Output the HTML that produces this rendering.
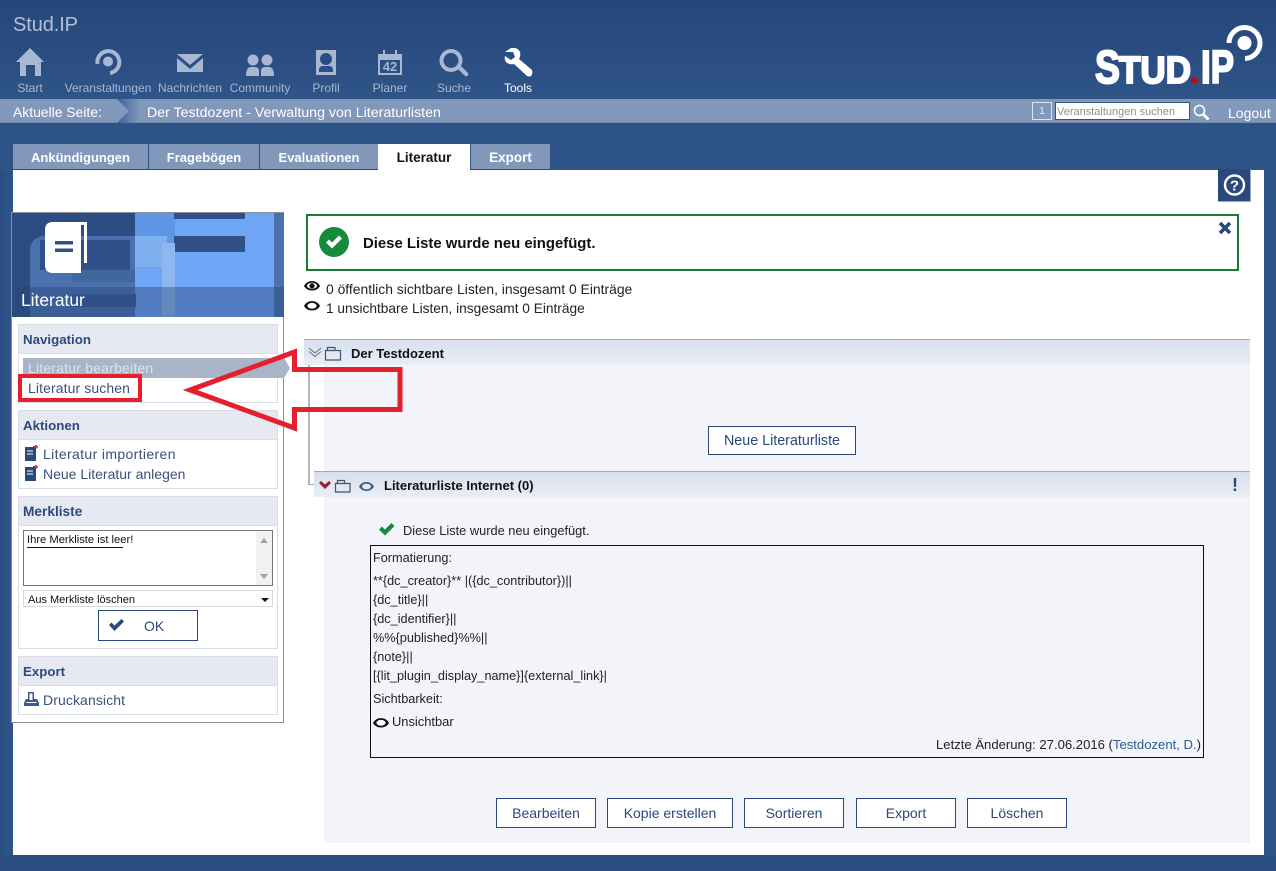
<!DOCTYPE html>
<html lang="de"><head><meta charset="utf-8"><title>Stud.IP</title>
<style>
*{box-sizing:border-box}
html,body{margin:0;padding:0}
body{width:1276px;height:871px;position:relative;overflow:hidden;background:#2e5386;font-family:"Liberation Sans",sans-serif;font-size:14px;color:#222}
.a,.t{position:absolute}
.t{white-space:nowrap;line-height:16px}
.nav{color:#a9b7d0;font-size:12px;text-align:center;width:90px;top:80px}
.tab{position:absolute;top:144px;height:26px;background:#8298bb;color:#fff;font-weight:bold;font-size:13px;line-height:27px;text-align:center;border-bottom:1px solid #28497a}
.sh{position:absolute;left:18px;width:260px;background:#e6e9f1;border:1px solid #d9dde6;color:#2d4a7c;font-weight:bold;font-size:13.3px;padding-left:4px}
.sb{position:absolute;left:18px;width:260px;background:#fff;border:1px solid #d9dde6;border-top:0}
.lnk{color:#3b5078}
.btn{position:absolute;top:798px;height:30px;width:100px;background:#fff;border:1px solid #28497a;color:#28497a;text-align:center;line-height:29px;font-size:14px}
.m{left:373px;color:#222;font-size:12.7px}
svg{position:absolute;overflow:visible}
</style></head><body>
<div class="a" style="left:0;top:0;width:1276px;height:99px;background:linear-gradient(#26467a,#2f5488)"></div>
<div class="t" style="left:13px;top:13px;font-size:20px;line-height:24px;color:#b4c0d5;letter-spacing:-.1px">Stud.IP</div>

<svg style="left:0;top:0" width="560" height="100" fill="#a9b7d3">
<path d="M30 48 L44 62 H41 V76 H35 V65 H26 V76 H20 V62 H16Z"/>
<path d="M97.500 64 A11 11 0 1 1 110 73" fill="none" stroke="#a9b7d3" stroke-width="4"/><circle cx="108" cy="61.500" r="5"/>
<path d="M177 54 H203 L190 65Z M177 58 L190 69 L203 58 V72 H177Z"/>
<circle cx="253" cy="60" r="5.500"/><circle cx="267" cy="60" r="5.500"/>
<path d="M246 76 Q246 67 251 67 H255 Q259 67 259 71 V76Z M261 76 V71 Q261 67 265 67 H269 Q274 67 274 76Z"/>
<path fill-rule="evenodd" d="M316 50 H336 V75 H316Z M326 53 A6 6 0 1 0 326 65 A6 6 0 1 0 326 53Z M319 72 H333 V70 Q333 66 329 66 H323 Q319 66 319 70Z"/>
<path fill-rule="evenodd" d="M378 54 H383 V50 H385 V54 H395 V50 H397 V54 H402 V75 H378Z M380 60 V73 H400 V60Z"/>
<text x="390" y="71" font-size="13" font-weight="bold" text-anchor="middle" font-family="Liberation Sans">42</text>
<path fill-rule="evenodd" d="M451 49 A11.500 11.500 0 1 0 451 72 A11.500 11.500 0 1 0 451 49Z M451 53 A7.500 7.500 0 1 1 451 68 A7.500 7.500 0 1 1 451 53Z"/>
<path d="M458 69 L461 66 L468 73 Q469 75 467 76 Q466 77 464 75Z"/>
<path fill="#fff" d="M505 52 L511 48 Q518 47 520 52 Q521 56 519 59 L532 70 Q533 74 531 76 Q529 77 527 76 L514 64 Q509 65 506 62 Q504 59 505 56 L511 60 L515 57 L513 52Z"/>
</svg>
<div class="t nav" style="left:-15px">Start</div>
<div class="t nav" style="left:63px">Veranstaltungen</div>
<div class="t nav" style="left:145px">Nachrichten</div>
<div class="t nav" style="left:215px">Community</div>
<div class="t nav" style="left:281px">Profil</div>
<div class="t nav" style="left:345px">Planer</div>
<div class="t nav" style="left:409px">Suche</div>
<div class="t nav" style="left:473px;color:#fff">Tools</div>

<svg style="left:1090px;top:20px" width="180" height="70" font-family="Liberation Sans" font-weight="bold" fill="#fff" stroke="#fff" stroke-width="2">
<text x="5" y="63" font-size="46" textLength="25" lengthAdjust="spacingAndGlyphs">S</text>
<text x="29" y="63" font-size="38" textLength="72" lengthAdjust="spacingAndGlyphs">TUD</text>
<rect x="101" y="57" width="7" height="6" fill="#b5121b" stroke="none"/>
<text x="111" y="63" font-size="46" textLength="33" lengthAdjust="spacingAndGlyphs">IP</text>
<path d="M139 23 A15.500 15.500 0 1 1 155 38.500" fill="none" stroke-width="5"/>
<circle cx="154.500" cy="23" r="7" stroke="none"/>
</svg>

<div class="a" style="left:0;top:99px;width:1276px;height:24px;background:#8298bb;border-bottom:1px solid #7489ac"></div>
<svg style="left:0;top:99px" width="150" height="24"><defs><linearGradient id="g" x1="0" x2="1"><stop offset="0" stop-color="#3f6196"/><stop offset="1" stop-color="#8298bb"/></linearGradient></defs><path d="M117 0 L129 12 L117 24 H140 V0Z" fill="url(#g)"/></svg>
<div class="t" style="left:13px;top:104px;color:#fff;font-size:13.900px">Aktuelle Seite:</div>
<div class="t" style="left:147px;top:105px;color:#fff;font-size:14.200px">Der Testdozent - Verwaltung von Literaturlisten</div>
<div class="a" style="left:1032px;top:102px;width:20px;height:18px;border:1px solid #dfe5ef;color:#e8edf4;font-size:10px;line-height:17px;text-align:center">1</div>
<div class="a" style="left:1055px;top:102px;width:135px;height:18px;background:#fff;border:1px solid #36527f;color:#8f8f8f;font-size:11px;line-height:18px;padding-left:1px;white-space:nowrap;overflow:hidden">Veranstaltungen suchen</div>
<svg style="left:1193px;top:104px" width="17" height="17" fill="none" stroke="#fff"><circle cx="6.500" cy="6.500" r="5" stroke-width="1.600"/><path d="M10.500 10.500 L15.500 15.500" stroke-width="3"/></svg>
<div class="t" style="left:1228px;top:105px;color:#fff;font-size:14px">Logout</div>

<div class="tab" style="left:13px;width:135px">Ankündigungen</div>
<div class="tab" style="left:149px;width:110px">Fragebögen</div>
<div class="tab" style="left:260px;width:118px">Evaluationen</div>
<div class="tab" style="left:378px;width:92px;height:27px;background:#fff;color:#111;border:0;font-size:13.500px">Literatur</div>
<div class="tab" style="left:471px;width:79px;font-size:13.500px">Export</div>

<div class="a" style="left:13px;top:170px;width:1251px;height:685px;background:#fff"></div>
<div class="a" style="left:0;top:855px;width:1276px;height:16px;background:#2a4e82"></div>
<div class="a" style="left:0;top:170px;width:13px;height:685px;background:linear-gradient(90deg,#2a4e82,#2f5488)"></div>

<div class="a" style="left:1218px;top:169px;width:33px;height:33px;background:#28497a;border-right:1px solid #9aa9c2;border-bottom:1px solid #9aa9c2"></div>
<svg style="left:1223px;top:174px" width="24" height="22"><circle cx="11.500" cy="11" r="9.500" fill="none" stroke="#fff" stroke-width="2.400"/><text x="11.500" y="16.500" font-size="15" font-weight="bold" fill="#fff" text-anchor="middle" font-family="Liberation Sans">?</text></svg>

<!-- sidebar -->
<div class="a" style="left:11px;top:212px;width:273px;height:511px;background:#fff;border:1px solid #8a8f99"></div>
<div class="a" style="left:12px;top:213px;width:272px;height:104px;background:#3d5f95;overflow:hidden">
<div class="a" style="left:0;top:0;width:123px;height:104px;background:#2c4d82"></div>
<div class="a" style="left:123px;top:0;width:149px;height:104px;background:#5f97e6"></div>
<div class="a" style="left:163px;top:0;width:99px;height:104px;background:#6ea6f5"></div>
<div class="a" style="left:262px;top:0;width:10px;height:104px;background:#4a70ad"></div>
<div class="a" style="left:162px;top:23px;width:71px;height:16px;background:#2f5088"></div>
<div class="a" style="left:162px;top:0;width:71px;height:6px;background:#2f5088"></div>
<div class="a" style="left:18px;top:23px;width:105px;height:81px;background:#4a70ad;border-radius:14px 0 0 0"></div>
<div class="a" style="left:28px;top:27px;width:90px;height:30px;background:#2f5088"></div>
<div class="a" style="left:60px;top:57px;width:63px;height:12px;background:#3f689f"></div>
<div class="a" style="left:123px;top:23px;width:32px;height:31px;background:#7fb0ef"></div>
<div class="a" style="left:123px;top:54px;width:27px;height:50px;background:#6ea6f5"></div>
<div class="a" style="left:150px;top:30px;width:13px;height:74px;background:#8db8ef"></div>
<div class="a" style="left:0;top:74px;width:272px;height:30px;background:rgba(40,70,120,.42)"></div>
<div class="a" style="left:60px;top:81px;width:64px;height:13px;background:#2f5088"></div>
</div>
<svg style="left:45px;top:222px" width="43" height="52" fill="#fff"><path d="M8 0 H42 V3 H36 V51 H8 Q0 51 0 43 V8 Q0 0 8 0Z"/><path d="M39 3 H42 V41 H39Z"/><path fill="#2f5088" d="M10 19 H28 V22.500 H10Z M10 26.500 H28 V30 H10Z"/></svg>
<div class="t" style="left:21px;top:291px;color:#fff;font-size:17.400px;line-height:18px">Literatur</div>

<div class="sh" style="top:324px;height:30px;line-height:29px">Navigation</div>
<div class="sb" style="top:354px;height:49px"></div>
<div class="a" style="left:23px;top:358px;width:261px;height:20px;background:#a9b4c6"></div>
<svg style="left:284px;top:358px" width="6" height="20"><path d="M0 0 L6 10 L0 20Z" fill="#a9b4c6"/></svg>
<div class="t" style="left:28px;top:360px;color:#dfe4ec;letter-spacing:.2px">Literatur bearbeiten</div>
<div class="t lnk" style="left:28px;top:380px;letter-spacing:.1px">Literatur suchen</div>

<div class="sh" style="top:410px;height:30px;line-height:29px">Aktionen</div>
<div class="sb" style="top:440px;height:49px"></div>
<svg style="left:25px;top:445px" width="14" height="36"><path d="M0 2 H8 V1 H11 V16 H0Z" fill="#28497a"/><path d="M2 6 H8 M2 9 H8" stroke="#fff"/><path d="M8.500 2 H13 M10.800 0 V4" stroke="#c8283c" stroke-width="1.600"/><g transform="translate(0,20)"><path d="M0 2 H8 V1 H11 V16 H0Z" fill="#28497a"/><path d="M2 6 H8 M2 9 H8" stroke="#fff"/><path d="M8.500 2 H13 M10.800 0 V4" stroke="#c8283c" stroke-width="1.600"/></g></svg>
<div class="t lnk" style="left:43px;top:446px;letter-spacing:.36px">Literatur importieren</div>
<div class="t lnk" style="left:43px;top:466px">Neue Literatur anlegen</div>

<div class="sh" style="top:496px;height:30px;line-height:29px;font-size:13.700px">Merkliste</div>
<div class="sb" style="top:526px;height:123px"></div>
<div class="a" style="left:23px;top:530px;width:250px;height:56px;background:#fff;border:1px solid #767676"></div>
<div class="a" style="left:256px;top:531px;width:16px;height:54px;background:#f1f1f1"></div>
<svg style="left:256px;top:531px" width="16" height="54" fill="#a3a3a3"><path d="M8 7 L12 12 H4Z M4 43 H12 L8 48Z"/></svg>
<div class="t" style="left:27px;top:532px;font-size:11.200px;color:#111">Ihre Merkliste ist leer!</div>
<div class="a" style="left:27px;top:547px;width:96px;height:1px;background:#111"></div>
<div class="a" style="left:23px;top:590px;width:250px;height:17px;background:#fff;border:1px solid #d5d9e0"></div>
<div class="t" style="left:28px;top:592px;font-size:11px;color:#111">Aus Merkliste löschen</div>
<svg style="left:260px;top:598px" width="10" height="5"><path d="M1 0 H9 L5 4Z" fill="#111"/></svg>
<div class="a" style="left:98px;top:610px;width:100px;height:31px;border:1px solid #28497a;background:#fff"></div>
<svg style="left:108px;top:618px" width="18" height="14"><path d="M1 7 L3.500 4.500 L6.500 7.500 L13.500 1 L16 3.500 L6.500 13Z" fill="#28497a"/></svg>
<div class="t" style="left:144px;top:618px;color:#28497a;font-size:14px">OK</div>

<div class="sh" style="top:656px;height:30px;line-height:29px">Export</div>
<div class="sb" style="top:686px;height:29px"></div>
<svg style="left:24px;top:692px" width="15" height="14" fill="#3a5a8c"><path d="M4 0 H10 V7 H13 L15 11 V14 H0 V11 L2 7 H4Z"/><path fill="#fff" d="M5.500 1.500 H8.500 V8 H5.500Z M2.500 10 H12.500 V11 H2.500Z"/></svg>
<div class="t lnk" style="left:43px;top:692px;letter-spacing:.1px">Druckansicht</div>

<!-- message -->
<div class="a" style="left:306px;top:214px;width:933px;height:57px;border:2px solid #1a7a2e;background:#fff"></div>
<svg style="left:319px;top:227px" width="31" height="31"><circle cx="15" cy="15" r="15" fill="#178a3c"/><path d="M7 15.500 L10 12.500 L13 15.500 L20 8.500 L23 11.500 L13 21.500Z" fill="#fff"/></svg>
<div class="t" style="left:363px;top:236px;font-weight:bold;font-size:14.900px;color:#111">Diese Liste wurde neu eingefügt.</div>
<svg style="left:1218px;top:221px" width="14" height="14"><path d="M2 2 L12 12 M12 2 L2 12" stroke="#28497a" stroke-width="3.600"/></svg>

<svg style="left:304px;top:281px" width="16" height="32"><path d="M0 5 C3 -1.500 13 -1.500 16 5 C13 11 3 11 0 5Z" fill="#111"/><ellipse cx="8" cy="4.800" rx="5" ry="3" fill="#fff"/><circle cx="8" cy="4.800" r="2.600" fill="#111"/><path d="M0 25 C3 18.500 13 18.500 16 25 C13 31 3 31 0 25Z" fill="#111"/><ellipse cx="8" cy="24.800" rx="4.600" ry="2.900" fill="#fff"/></svg>
<div class="t" style="left:326px;top:281px;color:#222;font-size:13.900px">0 öffentlich sichtbare Listen, insgesamt 0 Einträge</div>
<div class="t" style="left:326px;top:301px;color:#222;font-size:13.700px">1 unsichtbare Listen, insgesamt 0 Einträge</div>

<!-- list tree -->
<div class="a" style="left:304px;top:339px;width:946px;height:26px;background:linear-gradient(#d7e0ee,#e9edf5);border-top:1px solid #9eaac0"></div>
<div class="a" style="left:324px;top:365px;width:926px;height:478px;background:#f2f4f9"></div>
<div class="a" style="left:308px;top:365px;width:2px;height:120px;background:#b5b5b5"></div>
<div class="a" style="left:308px;top:484px;width:6px;height:1px;background:#a9a9a9"></div>
<div class="a" style="left:314px;top:471px;width:936px;height:26px;background:linear-gradient(#d7e0ee,#e9edf5);border-top:1px solid #9eaac0"></div>
<svg style="left:308px;top:347px" width="36" height="14" fill="none" stroke="#3f5573"><path d="M1 1 L7 6 L13 1 M1 4.500 L7 9.500 L13 4.500" stroke-width="1" stroke="#66717f"/><path d="M17.500 3.500 H32.500 V13 H17.500Z M19.500 3.500 V0.500 H27 V3.500" stroke-width="1.200"/></svg>
<div class="t" style="left:351px;top:346px;font-weight:bold;font-size:13px;color:#111">Der Testdozent</div>
<div class="a" style="left:708px;top:426px;width:148px;height:29px;background:#fff;border:1px solid #28497a;color:#28497a;text-align:center;line-height:29px;font-size:14.300px">Neue Literaturliste</div>

<svg style="left:318px;top:479px" width="60" height="14"><path d="M1 4 L3 2 L7 5.500 L11 2 L13 4 L7 10Z" fill="#9b1c2c"/><path d="M17.500 4.500 H32 V13 H17.500Z M19.500 4.500 V1.500 H26.500 V4.500" fill="none" stroke="#3f5573" stroke-width="1.200"/><path d="M41 7.500 C44 1.500 53 1.500 56 7.500 C53 13.500 44 13.500 41 7.500Z" fill="#3f5f8c"/><ellipse cx="48.500" cy="7.500" rx="4.400" ry="2.800" fill="#e3e8f1"/></svg>
<div class="t" style="left:384px;top:478px;font-weight:bold;font-size:13px;color:#111">Literaturliste Internet (0)</div>
<div class="t" style="left:1232px;top:477px;font-weight:bold;font-size:18px;color:#28497a">!</div>

<svg style="left:379px;top:523px" width="16" height="13"><path d="M0 6.500 L3 3.500 L6 6.500 L12.500 0 L15.500 3 L6 12.500Z" fill="#178a3c"/></svg>
<div class="t" style="left:403px;top:523px;color:#222;font-size:12.800px">Diese Liste wurde neu eingefügt.</div>

<div class="a" style="left:370px;top:545px;width:834px;height:213px;border:1px solid #111"></div>
<div class="t m" style="top:550px">Formatierung:</div>
<div class="t m" style="top:573px">**{dc_creator}** |({dc_contributor})||</div>
<div class="t m" style="top:592px">{dc_title}||</div>
<div class="t m" style="top:611px">{dc_identifier}||</div>
<div class="t m" style="top:630px">%%{published}%%||</div>
<div class="t m" style="top:649px">{note}||</div>
<div class="t m" style="top:668px">[{lit_plugin_display_name}]{external_link}|</div>
<div class="t m" style="top:691px">Sichtbarkeit:</div>
<svg style="left:373px;top:717px" width="16" height="12"><path d="M0 6 C3 -0.500 13 -0.500 16 6 C13 12 3 12 0 6Z" fill="#111"/><ellipse cx="8" cy="5.800" rx="4.600" ry="2.900" fill="#fff"/></svg>
<div class="t" style="top:714px;left:392px;font-size:12.900px;color:#222">Unsichtbar</div>
<div class="t" style="right:75px;top:737px;font-size:13.100px;color:#222">Letzte Änderung: 27.06.2016 (<span style="color:#2d5a94">Testdozent, D.</span>)</div>

<div class="btn" style="left:496px">Bearbeiten</div>
<div class="btn" style="left:607px;width:126px">Kopie erstellen</div>
<div class="btn" style="left:744px">Sortieren</div>
<div class="btn" style="left:856px">Export</div>
<div class="btn" style="left:967px">Löschen</div>

<!-- red annotations -->
<div class="a" style="left:18px;top:374px;width:124px;height:28px;border:4.500px solid #e5202e"></div>
<svg style="left:180px;top:340px" width="230" height="100"><path d="M10 50 L114.500 12 V29.500 H220 V69.500 H114.500 V88Z" fill="none" stroke="#e5202e" stroke-width="5"/></svg>
</body></html>
